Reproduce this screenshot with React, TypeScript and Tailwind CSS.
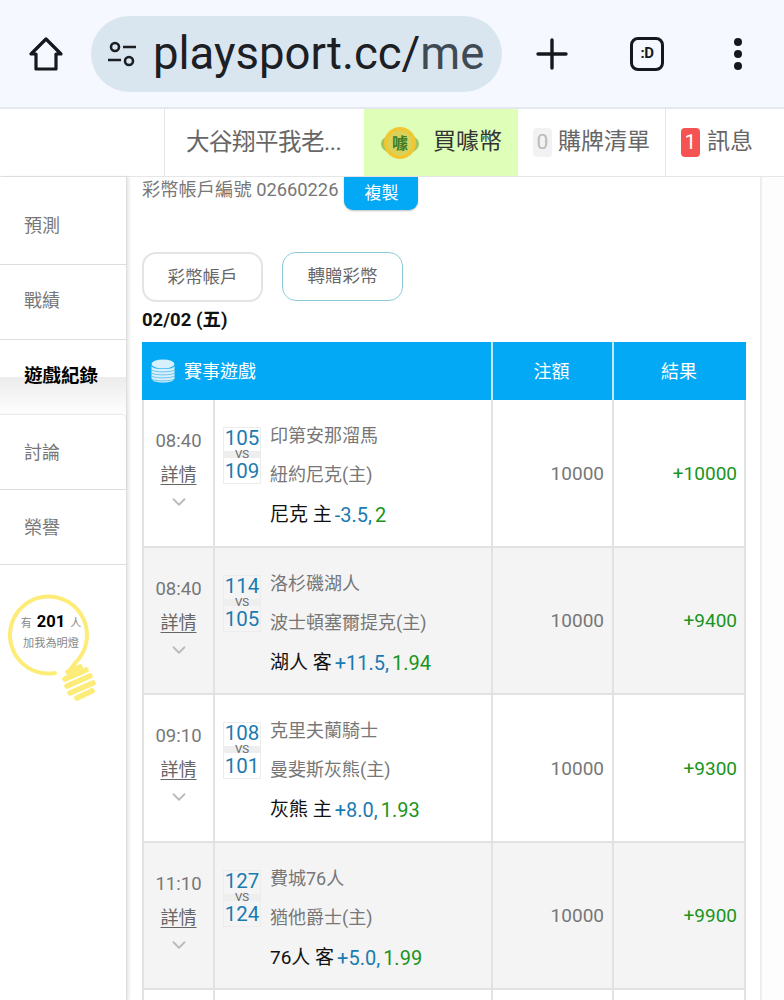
import { ChevronDown } from 'lucide-react'

const font = "font-['Roboto','Noto_Sans_CJK_TC',sans-serif]"

const sideItems = ['預測', '戰績', '遊戲紀錄', '討論', '榮譽']

interface Game {
  time: string
  away: string
  home: string
  awayScore: number
  homeScore: number
  pick: string
  line: string
  odds: string
  result: string
}

const games: Game[] = [
  { time: '08:40', away: '印第安那溜馬', home: '紐約尼克(主)', awayScore: 105, homeScore: 109, pick: '尼克 主', line: '-3.5,', odds: '2', result: '+10000' },
  { time: '08:40', away: '洛杉磯湖人', home: '波士頓塞爾提克(主)', awayScore: 114, homeScore: 105, pick: '湖人 客', line: '+11.5,', odds: '1.94', result: '+9400' },
  { time: '09:10', away: '克里夫蘭騎士', home: '曼斐斯灰熊(主)', awayScore: 108, homeScore: 101, pick: '灰熊 主', line: '+8.0,', odds: '1.93', result: '+9300' },
  { time: '11:10', away: '費城76人', home: '猶他爵士(主)', awayScore: 127, homeScore: 124, pick: '76人 客', line: '+5.0,', odds: '1.99', result: '+9900' },
]

function BrowserBar() {
  return (
    <div className="flex h-[109px] shrink-0 items-center border-b-2 border-[#e3e9ef] bg-[#f5f8fe]">
      <svg className="ml-[28px] h-[36px] w-[36px]" viewBox="0 0 36 36" fill="none" stroke="#15191d" strokeWidth="3.2" strokeLinejoin="round">
        <path d="M18 3 L33 18 H28 V33 H8 V18 H3 Z" />
      </svg>
      <div className="ml-[27px] flex h-[76px] w-[411px] items-center overflow-hidden rounded-full bg-[#d9e6f0]">
        <svg className="ml-[15px] h-[32px] w-[32px] shrink-0" viewBox="0 0 32 32" fill="none" stroke="#1b1f23" strokeWidth="2.6">
          <circle cx="9" cy="9" r="4" />
          <path d="M17 9 H30" />
          <path d="M2 22 H15" />
          <circle cx="23" cy="23" r="4" />
        </svg>
        <span className="ml-[15px] text-[45.5px] leading-none whitespace-nowrap text-[#1c2024]">
          playsport.cc/<span className="text-[#3f4a54]">me</span>
        </span>
      </div>
      <svg className="ml-[34px] h-[32px] w-[32px]" viewBox="0 0 32 32" stroke="#15191d" strokeWidth="3.4" strokeLinecap="round">
        <path d="M16 2 V30 M2 16 H30" />
      </svg>
      <div className="ml-[62px] flex h-[34px] w-[34px] items-center justify-center rounded-[8px] border-[3.5px] border-[#15191d] text-[15px] font-bold tracking-[-0.5px] text-[#15191d]">
        :D
      </div>
      <div className="ml-[70px] flex flex-col gap-[4px]">
        <span className="h-[8px] w-[8px] rounded-full bg-[#15191d]" />
        <span className="h-[8px] w-[8px] rounded-full bg-[#15191d]" />
        <span className="h-[8px] w-[8px] rounded-full bg-[#15191d]" />
      </div>
    </div>
  )
}

function CoinIcon() {
  return (
    <svg className="h-[36px] w-[40px]" viewBox="0 0 40 36">
      <ellipse cx="20" cy="19" rx="19" ry="11" fill="#9cc85f" />
      <circle cx="20" cy="18" r="16" fill="#f2c531" />
      <circle cx="20" cy="18" r="12.5" fill="#d9d25a" />
      <text x="20" y="24" textAnchor="middle" fontSize="16" fontWeight="700" fill="#3f7d2a">噱</text>
    </svg>
  )
}

function TopNav() {
  return (
    <div className="flex h-[68px] shrink-0 border-b border-[#e6e6e6] bg-white pl-[164px] text-[23px] text-[#666]">
      <div className="flex w-[200px] items-center border-l border-[#e6e6e6] pl-[21px] text-[23.5px] tracking-[-0.5px] whitespace-nowrap">大谷翔平我老...</div>
      <div className="flex w-[154px] items-center gap-[13px] bg-[#dfffb9] pl-[16px] text-[#333]">
        <CoinIcon />
        <span>買噱幣</span>
      </div>
      <div className="flex w-[147px] items-center gap-[6px] pl-[15px]">
        <span className="flex h-[29px] w-[19px] items-center justify-center rounded-[4px] bg-[#f2f2f2] text-[21px] text-[#bbb]">0</span>
        <span>購牌清單</span>
      </div>
      <div className="flex flex-1 items-center gap-[7px] border-l border-[#e6e6e6] pl-[15px]">
        <span className="flex h-[29px] w-[19px] items-center justify-center rounded-[4px] bg-[#f55252] text-[21px] text-white">1</span>
        <span>訊息</span>
      </div>
    </div>
  )
}

function Bulb() {
  return (
    <div className="relative mt-[27px] ml-[6px] h-[112px] w-[96px]">
      <svg className="h-full w-full" viewBox="0 0 96 112" fill="none" stroke="#fdec78" strokeLinecap="round">
        <path d="M49 81 A38.5 38.5 0 1 1 70 70 L63 79" strokeWidth="4" />
        <g strokeWidth="5.6">
          <path d="M62 80 L74 75" />
          <path d="M59 87 L80 78" />
          <path d="M61 94 L84 84" />
          <path d="M64 101 L87 91" />
          <path d="M71 106 L86 99" />
        </g>
      </svg>
      <div className="absolute top-[20px] left-0 w-[90px] text-center text-[#888]">
        <div className="flex items-baseline justify-center gap-[5px] text-[11px] leading-[20px]">
          有 <span className="text-[16.5px] font-bold text-black">201</span> 人
        </div>
        <div className="mt-[3px] text-[11.2px] leading-[14px] whitespace-nowrap">加我為明燈</div>
      </div>
    </div>
  )
}

function Sidebar() {
  return (
    <div className="z-10 h-full w-[127px] shrink-0 border-r border-[#dedede] bg-white shadow-[2px_0_3px_rgba(0,0,0,0.1)]">
      {sideItems.map((item, i) =>
        item === '遊戲紀錄' ? (
          <div key={item} className="flex h-[75px] items-center bg-gradient-to-b from-white from-50% via-[#ececec] via-50% to-white pb-[1px] pl-[24px] text-[18.5px] font-bold text-black">
            {item}
          </div>
        ) : (
          <div
            key={item}
            className={`flex items-center border-b border-[#dedede] bg-white pl-[24px] text-[18px] text-[#777] ${i === 0 ? 'h-[88px] pt-[10px]' : 'h-[75px]'} ${i === 1 ? 'pb-[3px]' : ''} ${i === 3 ? 'rounded-tr-[5px] shadow-[0_-1px_2px_rgba(0,0,0,0.1)]' : ''}`}
          >
            {item}
          </div>
        ),
      )}
      <Bulb />
    </div>
  )
}

function GameRow({ game, shaded }: { game: Game; shaded: boolean }) {
  return (
    <div className={`grid h-[147.5px] grid-cols-[73px_276px_123px_132px] border-b-2 border-[#e2e2e2] text-[18px] ${shaded ? 'bg-[#f4f4f4]' : 'bg-white'}`}>
      <div className="flex flex-col items-center border-x-2 border-[#e2e2e2] pt-[27px] text-[18.5px] text-[#777]">
        <span className="leading-[28px]">{game.time}</span>
        <span className="mt-[6px] text-[18px] leading-[27px] text-[#666] underline underline-offset-[3px]">詳情</span>
        <ChevronDown className="mt-[3px] h-[22px] w-[26px] text-[#bbb]" strokeWidth={2} />
      </div>
      <div className="flex pt-[22px] pl-[8px]">
        <div className="mt-[5px] flex h-[57px] w-[38px] flex-col items-center border border-[#ececec] text-[20.5px] text-[#1b7bb0]">
          <span className="h-[23px] leading-[21px]">{game.awayScore}</span>
          <span className="h-[7px] w-full bg-[#eee] text-center text-[11.5px] leading-[7px] text-[#666]">VS</span>
          <span className="h-[25px] leading-[27px]">{game.homeScore}</span>
        </div>
        <div className="ml-[9px] flex flex-col">
          <span className="leading-[28px] text-[#777]">{game.away}</span>
          <span className="mt-[11px] leading-[28px] text-[#777]">{game.home}</span>
          <span className="mt-[12px] flex gap-[3px] text-[19px] leading-[28px] whitespace-nowrap text-[#111]">
            {game.pick}
            <span className="text-[20px] text-[#1b7bb0]">{game.line}</span>
            <span className="text-[20px] text-[#1a9421]">{game.odds}</span>
          </span>
        </div>
      </div>
      <div className="flex items-center justify-end border-x-2 border-[#e2e2e2] pt-[2px] pr-[8px] text-[19px] text-[#777]">10000</div>
      <div className="flex items-center justify-end border-r-2 border-[#e2e2e2] pt-[2px] pr-[7px] text-[19px] text-[#1a9421]">{game.result}</div>
    </div>
  )
}

function MainPanel() {
  return (
    <div className="w-[635px] shrink-0 border-r-2 border-[#eeeeee] bg-white pl-[15px]">
      <div className="flex items-start text-[18.3px] text-[#777]">
        <span className="mt-[2px] leading-[22px] whitespace-nowrap">彩幣帳戶編號 02660226</span>
        <button className="ml-[6px] h-[33px] w-[74px] rounded-b-[9px] bg-[#03a9f4] text-[17px] text-white shadow-[0_1px_2px_rgba(0,0,0,0.25)]">複製</button>
      </div>
      <div className="mt-[42px] flex gap-[19px]">
        <button className="h-[50px] w-[121px] rounded-[14px] border-2 border-[#e4e4e4] text-[17.5px] text-[#666]">彩幣帳戶</button>
        <button className="h-[49px] w-[121px] rounded-[14px] border-[1.5px] border-[#8ccbdc] text-[17.5px] text-[#666]">轉贈彩幣</button>
      </div>
      <div className="mt-[5px] text-[18.5px] leading-[26px] font-bold text-[#111]">02/02 (五)</div>
      <div className="mt-[9px] w-[604px]">
        <div className="grid h-[58px] grid-cols-[349px_123px_132px] bg-[#03a9f4] text-[18px] text-white">
          <div className="flex items-center gap-[9px] pl-[9px]">
            <svg className="h-[24px] w-[24px]" viewBox="0 0 24 24" fill="none">
              <ellipse cx="12" cy="5" rx="11.5" ry="4.5" fill="#d7f0fb" />
              <path d="M0.5 6 V19 C0.5 22 5 23.5 12 23.5 C19 23.5 23.5 22 23.5 19 V6 C23.5 9 19 10 12 10 C5 10 0.5 9 0.5 6 Z" fill="#d7f0fb" />
              <g stroke="#5cc0ea" strokeWidth="0.9">
                <path d="M0.5 11 C4 13.5 20 13.5 23.5 11" />
                <path d="M0.5 14 C4 16.5 20 16.5 23.5 14" />
                <path d="M0.5 17 C4 19.5 20 19.5 23.5 17" />
                <path d="M0.5 20 C4 22.5 20 22.5 23.5 20" />
              </g>
            </svg>
            <span>賽事遊戲</span>
          </div>
          <div className="flex items-center justify-center border-x-2 border-[#bfe8fa] pr-[2px]">注額</div>
          <div className="flex items-center justify-center pr-[2px]">結果</div>
        </div>
        {games.map((game, i) => (
          <GameRow key={game.time + game.away} game={game} shaded={i % 2 === 1} />
        ))}
        <div className="grid h-[20px] grid-cols-[73px_276px_123px_132px] bg-white">
          <div className="border-x-2 border-[#e2e2e2]" />
          <div />
          <div className="border-x-2 border-[#e2e2e2]" />
          <div className="border-r-2 border-[#e2e2e2]" />
        </div>
      </div>
    </div>
  )
}

export default function App() {
  return (
    <div className={`flex h-[1000px] w-[784px] flex-col overflow-hidden bg-white ${font}`}>
      <BrowserBar />
      <TopNav />
      <div className="flex min-h-0 flex-1 bg-[#fdfdfd]">
        <Sidebar />
        <MainPanel />
      </div>
    </div>
  )
}
